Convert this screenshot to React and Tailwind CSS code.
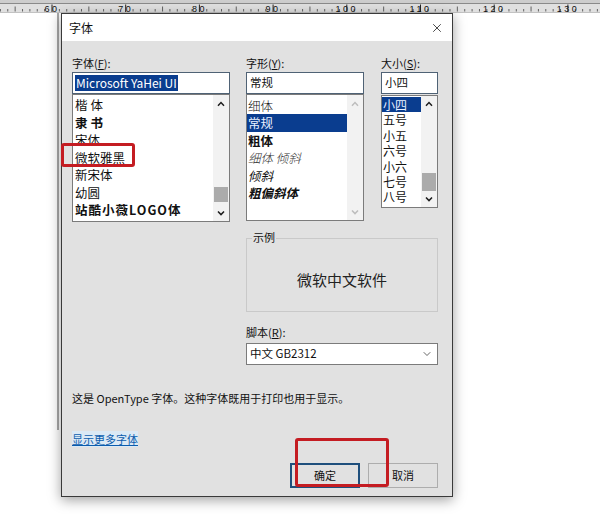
import React from "react";
import { X, ChevronDown } from "lucide-react";

function Ruler() {
  const x0 = 52;
  const step = 73.7;
  const labels = ["50", "60", "70", "80", "90", "100", "110", "120", "130", "140"];
  const ticks = [];
  for (let i = -10; i < 90; i++) {
    const x = x0 + (i * step) / 10;
    if (x < 0 || x > 600) continue;
    if (i % 10 === 0) continue;
    const mid = i % 5 === 0;
    ticks.push(
      <line key={i} x1={x} x2={x} y1={mid ? 6.5 : 9} y2={11.5} stroke="#555" strokeWidth="0.9" />
    );
  }
  return (
    <svg width="600" height="13" className="block">
      <rect x="0" y="0" width="600" height="13" fill="#e0e0e0" />
      <rect x="0" y="0" width="600" height="3" fill="#cdcdcd" />
      <line x1="0" x2="600" y1="3.5" y2="3.5" stroke="#8a8a8a" strokeWidth="1" />
      <line x1="0" x2="600" y1="12.5" y2="12.5" stroke="#c2c2c2" strokeWidth="1" />
      {ticks}
      {labels.map((l, k) => {
        const x = x0 + (k - 1) * step;
        if (x < -10 || x > 610) return null;
        return (
          <g key={l}>
            <text x={x} y="11.5" fontSize="9" textAnchor="middle" fill="#111" fontFamily="Liberation Sans, sans-serif" letterSpacing="2.5">
              {l}
            </text>
            <line x1={x} x2={x} y1="4.5" y2="12" stroke="#222" strokeWidth="1" />
          </g>
        );
      })}
    </svg>
  );
}

function Caret({ dir = "up", color = "#222" }) {
  return (
    <svg width="8" height="6" viewBox="0 0 8 6">
      {dir === "up" ? (
        <path d="M1 4.8 L4 1.6 L7 4.8" fill="none" stroke={color} strokeWidth="1.5" />
      ) : (
        <path d="M1 1.4 L4 4.6 L7 1.4" fill="none" stroke={color} strokeWidth="1.5" />
      )}
    </svg>
  );
}

function Scrollbar({ btn, thumb, thumbH = 15, thumbGap = 2, disabled }) {
  const c = disabled ? "#bdbdbd" : "#1e1e1e";
  return (
    <div className="w-[16px] flex flex-col bg-[#f2f2f2]">
      <div className="flex items-center justify-center" style={{ height: btn }}>
        <Caret dir="up" color={c} />
      </div>
      <div className="flex-1 flex flex-col justify-end items-center">
        {thumb && <div className="w-[14px] bg-[#ababab]" style={{ height: thumbH, marginBottom: thumbGap }} />}
      </div>
      <div className="flex items-center justify-center" style={{ height: btn }}>
        <Caret dir="down" color={c} />
      </div>
    </div>
  );
}

export default function App() {
  const fontList = [
    { t: "楷体", c: "tracking-[3px]" },
    { t: "隶书", c: "font-bold tracking-[3px]" },
    { t: "宋体", c: "" },
    { t: "微软雅黑", c: "" },
    { t: "新宋体", c: "" },
    { t: "幼圆", c: "" },
    { t: "站酷小薇LOGO体", c: "font-semibold tracking-[1px]" },
  ];
  const styles = [
    { t: "细体", c: "font-light" },
    { t: "常规", c: "", sel: true },
    { t: "粗体", c: "font-bold" },
    { t: "细体 倾斜", c: "italic font-light text-[#333]" },
    { t: "倾斜", c: "italic" },
    { t: "粗偏斜体", c: "italic font-bold" },
  ];
  const sizes = ["小四", "五号", "小五", "六号", "小六", "七号", "八号"];

  return (
    <div className="w-[600px] h-[514px] bg-white overflow-hidden text-[#111] font-['Noto_Sans_CJK_SC','Noto_Sans',sans-serif]">
      <Ruler />
      <div className="flex ml-[57px] gap-[2px]">
        <div className="w-[2px] h-[417px] bg-[#a9a9a9]" />
        <div className="relative w-[392px] h-[484px] border border-[#3a3a3a] bg-[#e1e1e1] shadow-[0_3px_12px_rgba(0,0,0,0.38)] flex flex-col">
          {/* title bar */}
          <div className="h-[27px] bg-white flex items-center justify-between pl-[7px] pr-[8px]">
            <span className="text-[12px] leading-[16px]">字体</span>
            <X size={14} strokeWidth={1.3} color="#111" />
          </div>

          {/* body */}
          <div className="flex-1 pl-[10px] pr-[14px] pt-[14px] flex flex-col">
            <div className="flex gap-[16px] items-start">
              {/* font column */}
              <div className="w-[158px] flex flex-col">
                <div className="h-[16px] leading-[16px] text-[11px] mb-[1px]">
                  字体(<span className="underline">F</span>):
                </div>
                <div className="h-[22px] border border-[#4f6275] bg-white px-[2px] flex items-center">
                  <span className="bg-[#0a3d8f] text-white text-[12px] leading-[16px] px-[1px]">Microsoft YaHei UI</span>
                </div>
                <div className="h-[128px] border border-[#7b7b7b] bg-white flex">
                  <div className="flex-1 pt-[1px] pl-[2px]">
                    {fontList.map((f) => (
                      <div key={f.t} className={`h-[17.5px] leading-[17.5px] text-[12.5px] ${f.c}`}>
                        {f.t}
                      </div>
                    ))}
                  </div>
                  <Scrollbar btn={17} thumb thumbH={15} thumbGap={2} />
                </div>
              </div>

              {/* right part */}
              <div className="w-[192px] flex flex-col">
                <div className="flex gap-[17px] items-start">
                  <div className="w-[118px] flex flex-col">
                    <div className="h-[16px] leading-[16px] text-[11px] mb-[1px]">
                      字形(<span className="underline">Y</span>):
                    </div>
                    <div className="h-[22px] border border-[#4f6275] bg-white px-[3px] flex items-center text-[11.5px]">
                      常规
                    </div>
                    <div className="h-[127px] border border-[#7b7b7b] bg-white flex">
                      <div className="flex-1 pt-[1.5px]">
                        {styles.map((s) => (
                          <div
                            key={s.t}
                            className={`h-[17.5px] leading-[17.5px] text-[12.5px] pl-[1px] ${s.c} ${
                              s.sel ? "bg-[#0a3d8f] text-[#e8f0ff]" : ""
                            }`}
                          >
                            {s.t}
                          </div>
                        ))}
                      </div>
                      <Scrollbar btn={17} disabled />
                    </div>
                  </div>

                  <div className="w-[57px] flex flex-col">
                    <div className="h-[16px] leading-[16px] text-[11px] mb-[1px]">
                      大小(<span className="underline">S</span>):
                    </div>
                    <div className="h-[22px] border border-[#4f6275] bg-white px-[3px] flex items-center text-[11.5px]">
                      小四
                    </div>
                    <div className="mt-[1px] h-[113px] border border-[#7b7b7b] bg-white flex">
                      <div className="flex-1 pt-[1px]">
                        {sizes.map((s, i) => (
                          <div
                            key={s}
                            className={`h-[15.4px] leading-[15.4px] text-[12px] pl-[1px] ${
                              i === 0 ? "bg-[#0a3d8f] text-[#e8f0ff]" : ""
                            }`}
                          >
                            {s}
                          </div>
                        ))}
                      </div>
                      <Scrollbar btn={16} thumb thumbH={18} thumbGap={0} />
                    </div>
                  </div>
                </div>

                {/* sample group */}
                <div className="relative mt-[17px] h-[74px] border border-[#c9c9c9] flex items-center justify-center pt-[10px]">
                  <span className="absolute left-[5px] top-[-9px] bg-[#e1e1e1] px-[1px] text-[11px] leading-[14px]">示例</span>
                  <span className="text-[15px] leading-[20px] text-[#222]">微软中文软件</span>
                </div>

                <div className="mt-[12px] h-[16px] leading-[16px] text-[11px]">
                  脚本(<span className="underline">R</span>):
                </div>
                <div className="mt-[3px] h-[22px] border border-[#7b7b7b] bg-white pl-[3px] pr-[4px] flex items-center justify-between text-[11.5px]">
                  <span>中文 GB2312</span>
                  <ChevronDown size={12} strokeWidth={1.5} color="#333" />
                </div>
              </div>
            </div>

            <div className="mt-[25px] text-[11px] leading-[16px]">这是 OpenType 字体。这种字体既用于打印也用于显示。</div>
            <div className="mt-[25px] text-[11px] leading-[16px]">
              <span className="text-[#0b5cad] underline bg-[#dbe9f5]">显示更多字体</span>
            </div>

            <div className="mt-[16px] flex justify-end gap-[8px]">
              <div className="w-[70px] h-[25px] border-2 border-[#1f4f7c] bg-[#e1e1e1] flex items-center justify-center text-[11px]">
                确定
              </div>
              <div className="w-[70px] h-[25px] border border-[#adadad] bg-[#e1e1e1] flex items-center justify-center text-[11px]">
                取消
              </div>
            </div>
          </div>

          {/* red annotation boxes */}
          <div className="absolute left-[-1px] top-[129px] w-[74px] h-[24px] border-[3px] border-[#c41c22] rounded-[3px]" />
          <div className="absolute left-[233px] top-[424px] w-[94px] h-[49px] border-[3px] border-[#c41c22] rounded-[3px]" />
        </div>
      </div>
    </div>
  );
}
